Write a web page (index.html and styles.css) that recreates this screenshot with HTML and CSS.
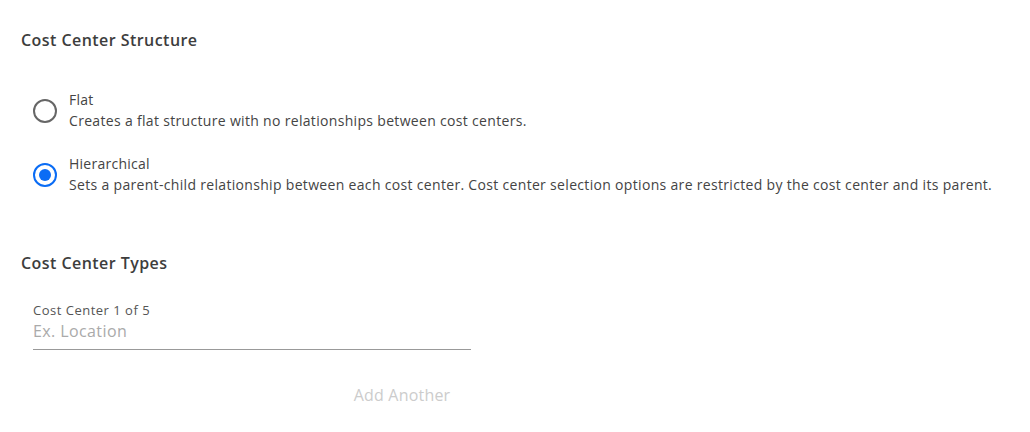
FILE: index.html
```html
<!DOCTYPE html>
<html lang="en">

<head>
  <meta charset="UTF-8">
  <meta name="viewport" content="width=device-width, initial-scale=1.0">
  <title>Cost Centers</title>
  <link rel="stylesheet" href="styles.css">
</head>

<body>
  <div class="page">
    <h2 class="section-title">Cost Center Structure</h2>

    <ul class="options">
      <li class="option">
        <span class="radio"></span>
        <div class="option-text">
          <div class="option-name">Flat</div>
          <div class="option-desc">Creates a flat structure with no relationships between cost centers.</div>
        </div>
      </li>
      <li class="option">
        <span class="radio checked"></span>
        <div class="option-text">
          <div class="option-name">Hierarchical</div>
          <div class="option-desc">Sets a parent-child relationship between each cost center. Cost center selection options are restricted by the cost center and its parent.</div>
        </div>
      </li>
    </ul>

    <h2 class="section-title types-title">Cost Center Types</h2>

    <div class="field">
      <label class="field-label">Cost Center 1 of 5</label>
      <input class="field-input" type="text" placeholder="Ex. Location">
    </div>

    <div class="add-row">
      <a href="javascript:;" class="add-link">Add Another</a>
    </div>
  </div>
</body>

</html>
```

FILE: styles.css
```css
* {
  padding: 0;
  margin: 0;
  list-style: none;
  box-sizing: border-box;
}

body {
  font-family: "Open Sans", Roboto, sans-serif;
  color: #444;
  background-color: #fff;
}

.page {
  padding: 31px 21px 0;
}

.section-title {
  font-size: 16px;
  font-weight: 600;
  color: #3d3d3d;
  line-height: 18px;
  letter-spacing: 0.45px;
}

.options {
  padding-top: 41px;
}

.option {
  display: flex;
  align-items: center;
  margin-bottom: 22px;
}

.radio {
  width: 24px;
  height: 24px;
  border: 2px solid #666;
  border-radius: 50%;
  margin: 0 12px 0 12px;
  flex-shrink: 0;
  display: flex;
  align-items: center;
  justify-content: center;
}

.radio.checked {
  border-color: #0a6cf5;
}

.radio.checked::after {
  content: "";
  width: 12px;
  height: 12px;
  border-radius: 50%;
  background-color: #0a6cf5;
}

.option-name {
  font-size: 14px;
  line-height: 20px;
  color: #444;
  letter-spacing: 0.25px;
}

.option-desc {
  font-size: 14px;
  line-height: 22px;
  color: #444;
  letter-spacing: 0.32px;
}

.types-title {
  margin-top: 58px;
}

.field {
  width: 438px;
  margin: 30px 0 0 12px;
}

.field-label {
  display: block;
  font-size: 13px;
  line-height: 16px;
  color: #555;
  letter-spacing: 0.5px;
}

.field-input {
  display: block;
  width: 100%;
  border: none;
  border-bottom: 1px solid #999;
  font-family: inherit;
  font-size: 16px;
  line-height: 20px;
  padding: 3px 0 8px;
  color: #444;
  letter-spacing: 0.4px;
  outline: none;
}

.field-input::placeholder {
  color: #aaa;
}

.add-row {
  width: 762px;
  text-align: center;
  padding-top: 34px;
}

.add-link {
  font-size: 16px;
  color: #ccc;
  letter-spacing: 0.2px;
  text-decoration: none;
}
```
